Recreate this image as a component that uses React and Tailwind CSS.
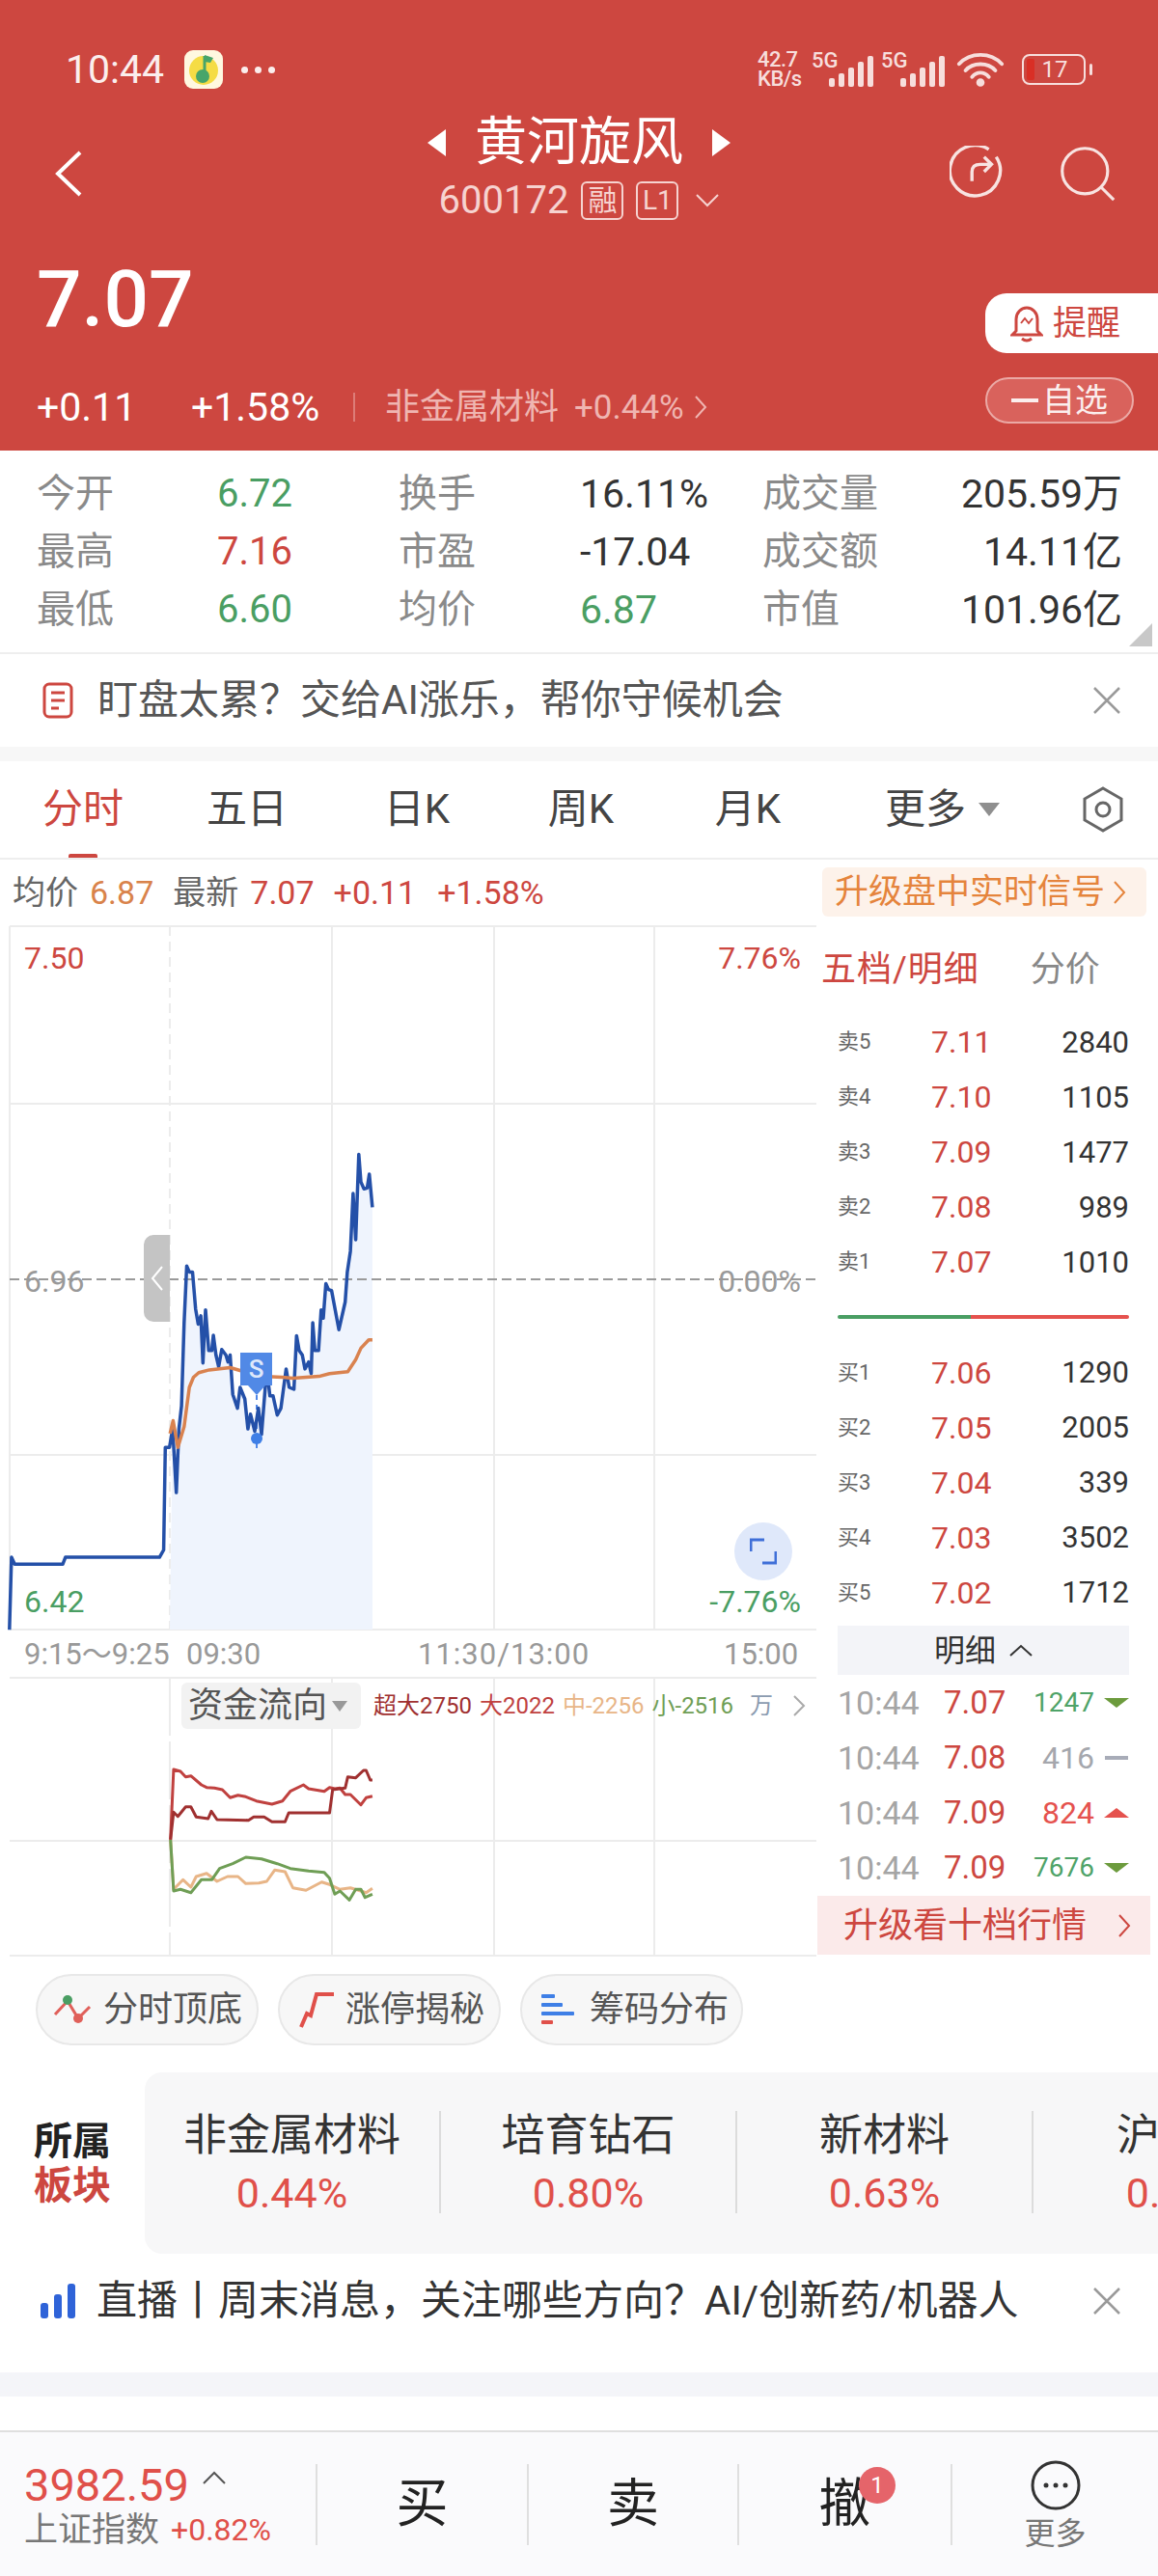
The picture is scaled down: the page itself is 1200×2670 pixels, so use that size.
import React from "react";

// points traced off the chart, in zoom coordinates (x/1.845, y/2.09 from y=950)
const blue = [[18,1545],[22,1388],[28,1403],[120,1403],[125,1388],[305,1388],[313,1372],[316,1150],[324,1150],[330,1110],[337,1248],[342,1110],[347,1060],[352,880],[357,757],[362,770],[368,770],[374,850],[379,883],[384,865],[388,967],[393,852],[399,940],[405,940],[408,907],[413,950],[418,975],[424,938],[432,950],[436,965],[440,950],[445,1035],[454,1065],[459,1020],[468,1045],[474,1110],[479,1078],[487,1115],[494,1065],[500,1122],[510,980],[516,1038],[522,1038],[530,1080],[537,1065],[547,980],[553,1020],[562,1024],[567,908],[572,940],[578,950],[583,980],[590,965],[595,990],[598,880],[602,940],[609,940],[614,852],[618,870],[623,795],[628,808],[634,810],[648,895],[660,835],[664,770],[670,725],[675,600],[680,700],[686,515],[690,575],[696,590],[702,588],[706,558],[712,630]];
const avg = [[325,1120],[331,1092],[340,1150],[352,1105],[362,1020],[370,998],[380,988],[400,982],[440,977],[470,987],[500,996],[540,998],[560,1000],[610,996],[630,990],[665,986],[680,960],[690,935],[705,917],[712,917]];

// money flow, zoom coordinates (x/1.845, y/3 from y=1700)
const big = [[326,620],[332,402],[345,408],[355,425],[365,422],[385,450],[395,458],[410,460],[425,465],[440,490],[455,482],[470,487],[490,500],[520,510],[540,500],[555,470],[580,450],[590,462],[620,470],[630,458],[640,462],[650,460],[660,480],[670,480],[690,512],[700,490],[712,485]];
const huge = [[326,620],[332,535],[340,548],[355,518],[365,518],[375,550],[398,555],[404,532],[415,558],[475,560],[485,550],[505,550],[520,565],[545,565],[552,537],[630,537],[636,465],[660,460],[665,425],[680,428],[695,405],[700,405],[708,435],[712,435]];
const mid = [[326,620],[332,775],[350,745],[365,768],[375,735],[395,725],[415,750],[435,735],[455,735],[470,757],[495,755],[510,750],[525,715],[545,720],[560,770],[585,778],[615,752],[630,760],[650,775],[670,770],[690,780],[700,785],[712,772]];
const small = [[326,620],[332,780],[345,775],[365,785],[385,745],[405,745],[420,710],[445,695],[470,675],[500,680],[530,695],[555,710],[590,718],[620,722],[630,740],[640,790],[650,780],[668,808],[680,775],[690,775],[698,800],[712,790]];

const toChart = (pts) => pts.map(([x, y]) => `${(x / 1.845).toFixed(1)},${(950 + y / 2.09 - 958).toFixed(1)}`).join(" ");
const toFlow = (pts) => pts.map(([x, y]) => `${(x / 1.845).toFixed(1)},${(1700 + y / 3 - 1738).toFixed(1)}`).join(" ");

const sells = [["卖5","7.11","2840"],["卖4","7.10","1105"],["卖3","7.09","1477"],["卖2","7.08","989"],["卖1","7.07","1010"]];
const buys = [["买1","7.06","1290"],["买2","7.05","2005"],["买3","7.04","339"],["买4","7.03","3502"],["买5","7.02","1712"]];
const trades = [
  { p: "7.07", v: "1247", c: "text-[#4fa368]", s: "text-[28px]", a: "down" },
  { p: "7.08", v: "416", c: "text-[#a5a7ad]", s: "text-[32px]", a: "flat" },
  { p: "7.09", v: "824", c: "text-[#e5524e]", s: "text-[32px]", a: "up" },
  { p: "7.09", v: "7676", c: "text-[#4fa368]", s: "text-[28px]", a: "down" },
];
const stats = [
  ["今开","6.72","text-[#4a9e63]","换手","16.11%","text-[#333]","成交量","205.59万"],
  ["最高","7.16","text-[#cd4740]","市盈","-17.04","text-[#333]","成交额","14.11亿"],
  ["最低","6.60","text-[#4a9e63]","均价","6.87","text-[#4a9e63]","市值","101.96亿"],
];
const sectors = [["非金属材料","0.44%"],["培育钻石","0.80%"],["新材料","0.63%"],["沪股通","0.52%"]];

const Signal = () => (
  <svg width="46" height="32" viewBox="0 0 46 32" fill="#f7dedc">
    <rect x="0" y="23" width="6" height="9" rx="2" />
    <rect x="10" y="18" width="6" height="14" rx="2" />
    <rect x="20" y="12" width="6" height="20" rx="2" />
    <rect x="30" y="6" width="6" height="26" rx="2" />
    <rect x="40" y="0" width="6" height="32" rx="2" />
  </svg>
);

const Close = () => (
  <svg width="30" height="30" viewBox="0 0 30 30" stroke="#9a9a9a" strokeWidth="2.5" fill="none">
    <path d="M2 2 L28 28 M28 2 L2 28" />
  </svg>
);

const App = () => {
  return (
    <div className="w-[1200px] h-[2670px] overflow-hidden bg-white font-['Roboto','Noto_Sans_CJK_SC',sans-serif]">
      {/* Red header */}
      <header className="h-[467px] bg-[#cd4740] text-white">
        {/* Status bar */}
        <div className="h-[120px] pt-[48px]">
          <div className="h-[48px] flex items-center pl-[68px] pr-[68px]">
            <span className="text-[41px] text-[#fbeeed] leading-none">10:44</span>
            <svg className="ml-[21px]" width="40" height="40" viewBox="0 0 40 40">
              <rect width="40" height="40" rx="9" fill="#fff8e0" />
              <circle cx="20" cy="21" r="15" fill="#f5dc45" />
              <path d="M21 6 L21 25" stroke="#47a56a" strokeWidth="3" />
              <path d="M21 5 L30 8 L27 13 L21 12 Z" fill="#47a56a" />
              <circle cx="19" cy="27" r="7" fill="#47a56a" />
            </svg>
            <span className="ml-[19px] flex gap-[7px]">
              <i className="w-[7px] h-[7px] rounded-full bg-[#fbeeed]" />
              <i className="w-[7px] h-[7px] rounded-full bg-[#fbeeed]" />
              <i className="w-[7px] h-[7px] rounded-full bg-[#fbeeed]" />
            </span>
            <div className="ml-auto flex items-center text-[#f7dedc]">
              <div className="text-[22px] font-medium leading-[20px] w-[52px] tracking-[-0.5px]">
                <div>42.7</div>
                <div>KB/s</div>
              </div>
              <div className="ml-[4px] relative w-[64px] h-[36px] flex items-end justify-end">
                <span className="absolute left-0 top-[-2px] text-[22px] font-medium leading-none">5G</span>
                <Signal />
              </div>
              <div className="relative ml-[8px] w-[66px] h-[36px] flex items-end justify-end">
                <span className="absolute left-0 top-[-2px] text-[22px] font-medium leading-none">5G</span>
                <Signal />
              </div>
              <svg className="ml-[12px]" width="50" height="38" viewBox="0 0 52 38" fill="none" stroke="#f7dedc" strokeWidth="4" strokeLinecap="round">
                <path d="M3 13 C15 0 37 0 49 13" />
                <path d="M10 20 C18 11 34 11 42 20" />
                <path d="M17 27 C22 21 30 21 35 27" />
                <circle cx="26" cy="33" r="2.5" fill="#f7dedc" />
              </svg>
              <div className="ml-[18px] w-[66px] h-[32px] rounded-[8px] border-2 border-[#f7dedc] flex items-center relative">
                <span className="absolute left-[3px] top-[3px] bottom-[3px] w-[8px] bg-[#d92f25] rounded-[2px]" />
                <span className="w-full text-center text-[24px] leading-none pl-[2px]">17</span>
              </div>
              <span className="ml-[4px] w-[3px] h-[12px] rounded-full bg-[#f7dedc]" />
            </div>
          </div>
        </div>

        {/* Title row */}
        <div className="h-[120px] flex items-center relative">
          <svg className="ml-[56px]" width="30" height="48" viewBox="0 0 30 48" fill="none" stroke="#fff" strokeWidth="4">
            <path d="M27 2 L4 24 L27 46" />
          </svg>
          <div className="absolute left-0 right-0 top-0 flex flex-col items-center">
            <div className="h-[56px] flex items-center gap-[30px]">
              <span className="w-0 h-0 border-y-[14px] border-y-transparent border-r-[19px] border-r-white" />
              <span className="text-[54px] leading-none">黄河旋风</span>
              <span className="w-0 h-0 border-y-[14px] border-y-transparent border-l-[19px] border-l-white" />
            </div>
            <div className="h-[40px] mt-[12px] flex items-center text-[#f6d3d0]">
              <span className="text-[40px] leading-none">600172</span>
              <span className="ml-[13px] w-[44px] h-[40px] border-2 border-[#f6d3d0] rounded-[6px] flex items-center justify-center text-[30px] leading-none">融</span>
              <span className="ml-[13px] w-[44px] h-[40px] border-2 border-[#f6d3d0] rounded-[6px] flex items-center justify-center text-[28px] leading-none">L1</span>
              <svg className="ml-[18px]" width="24" height="14" viewBox="0 0 24 14" fill="none" stroke="#f6d3d0" strokeWidth="2">
                <path d="M1 1 L12 12 L23 1" />
              </svg>
            </div>
          </div>
          <svg className="ml-auto" width="58" height="58" viewBox="0 0 60 60" fill="none" stroke="#f8e3e1" strokeWidth="3.5">
            <path d="M42 4 A27 27 0 1 0 50 12" />
            <path d="M24 38 L24 28 Q24 20 33 20 L44 20 M37 12 L45 20 L37 28" />
          </svg>
          <svg className="ml-[56px] mr-[44px]" width="58" height="60" viewBox="0 0 64 64" fill="none" stroke="#f8e3e1" strokeWidth="3.5">
            <circle cx="29" cy="29" r="26" />
            <path d="M48 48 L62 62" />
          </svg>
        </div>

        {/* Price row */}
        <div className="h-[227px] flex justify-between">
          <div className="pl-[38px] pt-[28px]">
            <div className="text-[82px] leading-[84px] font-medium">7.07</div>
            <div className="mt-[48px] h-[44px] flex items-center">
              <span className="text-[41px] w-[160px] leading-none">+0.11</span>
              <span className="text-[41px] w-[168px] leading-none">+1.58%</span>
              <span className="w-[2px] h-[30px] bg-[#dd7d78]" />
              <span className="ml-[31px] text-[36px] text-[#efb5b1] leading-none">非金属材料</span>
              <span className="ml-[16px] text-[35px] text-[#efb5b1] leading-none">+0.44%</span>
              <svg className="ml-[10px]" width="14" height="26" viewBox="0 0 14 26" fill="none" stroke="#efb5b1" strokeWidth="2">
                <path d="M2 2 L12 13 L2 24" />
              </svg>
            </div>
          </div>
          <div className="flex flex-col items-end pt-[64px] gap-[25px]">
            <div className="w-[179px] h-[62px] bg-white rounded-l-[22px] flex items-center pl-[26px] text-[#cd4740]">
              <svg width="34" height="40" viewBox="0 0 34 40" fill="none" stroke="#cd4740" strokeWidth="3">
                <path d="M6 28 L6 16 A11 12 0 0 1 28 16 L28 28 L32 32 L2 32 Z" />
                <path d="M12 36 Q17 40 22 36" />
                <path d="M11 20 L15 15 L19 20 L23 15" strokeWidth="2" />
              </svg>
              <span className="ml-[10px] text-[35px] leading-none">提醒</span>
            </div>
            <div className="mr-[25px] w-[154px] h-[48px] bg-[#d9625c] border-2 border-[#eba9a5] rounded-full flex items-center justify-center text-[34px] text-[#fbeeed] leading-none">
              <span className="w-[28px] h-[4px] bg-[#fbeeed] mr-[4px]" />
              自选
            </div>
          </div>
        </div>
      </header>

      {/* Quote stats */}
      <section className="relative h-[211px] pt-[15px] border-b-[2px] border-[#eeeeee]">
        {stats.map((r) => (
          <div key={r[0]} className="h-[60px] flex items-center text-[40px] leading-none">
            <span className="ml-[38px] w-[187px] text-[#8a8a8a]">{r[0]}</span>
            <span className={`w-[188px] ${r[2]}`}>{r[1]}</span>
            <span className="w-[188px] text-[#8a8a8a]">{r[3]}</span>
            <span className={`w-[189px] text-[41px] ${r[5]}`}>{r[4]}</span>
            <span className="w-[120px] text-[#8a8a8a]">{r[6]}</span>
            <span className="w-[253px] text-right text-[41px] text-[#333]">{r[7]}</span>
          </div>
        ))}
        <span className="absolute right-[6px] bottom-[6px] w-0 h-0 border-b-[24px] border-b-[#c8c8c8] border-l-[24px] border-l-transparent" />
      </section>

      {/* AI banner */}
      <div className="h-[96px] flex items-center pl-[44px]">
        <svg width="32" height="38" viewBox="0 0 32 38" fill="none" stroke="#cd4740" strokeWidth="3">
          <rect x="2" y="2" width="28" height="34" rx="5" />
          <path d="M9 11 L23 11 M9 19 L23 19 M9 27 L17 27" />
        </svg>
        <span className="ml-[25px] text-[42px] text-[#555] leading-none">盯盘太累？交给AI涨乐，帮你守候机会</span>
        <span className="ml-auto mr-[38px] flex"><Close /></span>
      </div>
      <div className="h-[15px] bg-[#f7f7f7]" />

      {/* Period tabs */}
      <nav className="relative h-[102px] border-b-[2px] border-[#eeeeee] flex items-center text-[42px] text-[#444] leading-none">
        <span className="w-[172px] text-center text-[#cd4740]">分时</span>
        <span className="w-[168px] text-center">五日</span>
        <span className="w-[184px] text-center">日K</span>
        <span className="w-[156px] text-center">周K</span>
        <span className="w-[190px] text-center">月K</span>
        <span className="ml-[47px]">更多</span>
        <span className="ml-[13px] w-0 h-0 border-x-[11px] border-x-transparent border-t-[14px] border-t-[#8f8f8f]" />
        <svg className="ml-[85px]" width="44" height="48" viewBox="0 0 44 48" fill="none" stroke="#666" strokeWidth="3">
          <path d="M22 2 L41 13 L41 35 L22 46 L3 35 L3 13 Z" />
          <circle cx="22" cy="24" r="7" />
        </svg>
        <span className="absolute left-[71px] bottom-0 w-[30px] h-[4px] bg-[#cd4740] rounded-t-[2px]" />
      </nav>

      {/* Average / latest row */}
      <div className="h-[67px] flex items-center text-[34px] leading-none">
        <span className="ml-[13px] text-[#666]">均价</span>
        <span className="ml-[12px] text-[#d9834b]">6.87</span>
        <span className="ml-[20px] text-[#666]">最新</span>
        <span className="ml-[12px] text-[#cd4740]">7.07</span>
        <span className="ml-[20px] text-[#cd4740]">+0.11</span>
        <span className="ml-[22px] text-[#cd4740]">+1.58%</span>
        <div className="ml-auto mr-[12px] w-[336px] h-[51px] bg-[#fdf2ea] rounded-[6px] flex items-center pl-[13px] text-[35px] text-[#e5843c]">
          升级盘中实时信号
          <svg className="ml-[8px]" width="14" height="26" viewBox="0 0 14 26" fill="none" stroke="#e5843c" strokeWidth="2">
            <path d="M2 2 L12 13 L2 24" />
          </svg>
        </div>
      </div>

      <div className="flex h-[1072px]">
        {/* Left: charts */}
        <div className="w-[846px]">
          <div className="relative h-[734px]">
            <svg className="absolute inset-0" width="846" height="734" viewBox="0 0 846 734" fill="none">
              <g stroke="#ececec" strokeWidth="2">
                <path d="M10 2 L846 2 M10 186 L846 186 M10 550 L846 550 M10 731 L846 731" />
                <path d="M10 2 L10 731 M344 2 L344 731 M512 2 L512 731 M678 2 L678 731" />
                <path d="M176 2 L176 734" strokeDasharray="10 6" />
              </g>
              <polygon points={`176,731 ${toChart(blue.filter((p) => p[0] >= 325))} 386,731`} fill="#eff4fd" />
              <path d="M10 368 L846 368" stroke="#9a9a9a" strokeWidth="2" strokeDasharray="10 5" />
              <path d="M266 488 L266 545" stroke="#4f86e8" strokeWidth="2" strokeDasharray="5 5" />
              <polyline points={toChart(blue)} stroke="#2450a8" strokeWidth="3.5" strokeLinejoin="round" />
              <polygon points="257,478 275,478 266,488" fill="#5189e6" />
              <polyline points={toChart(avg)} stroke="#d9824f" strokeWidth="3.5" strokeLinejoin="round" />
              <circle cx="266" cy="533" r="6" fill="#3f7fe6" />
            </svg>
            {/* Axis labels, handle and marks over the chart */}
            <span className="absolute left-[25px] top-[17px] text-[32px] leading-[36px] text-[#cd4740]">7.50</span>
            <span className="absolute right-[16px] top-[17px] text-[32px] leading-[36px] text-[#cd4740]">7.76%</span>
            <span className="absolute left-[25px] top-[352px] text-[32px] leading-[36px] text-[#999]">6.96</span>
            <span className="absolute right-[16px] top-[352px] text-[32px] leading-[36px] text-[#999]">0.00%</span>
            <span className="absolute left-[25px] top-[684px] text-[32px] leading-[36px] text-[#4a9e63]">6.42</span>
            <span className="absolute right-[16px] top-[684px] text-[32px] leading-[36px] text-[#4a9e63]">-7.76%</span>
            <div className="absolute left-[149px] top-[322px] w-[27px] h-[90px] bg-[#c4c4c4] rounded-l-[10px] flex items-center justify-center">
              <svg width="14" height="28" viewBox="0 0 14 28" fill="none" stroke="#fff" strokeWidth="2">
                <path d="M12 2 L2 14 L12 26" />
              </svg>
            </div>
            <div className="absolute left-[249px] top-[444px] w-[33px] h-[34px] bg-[#5189e6] text-[#dfe8fa] text-[26px] leading-[34px] font-medium text-center">S</div>
            <div className="absolute left-[761px] top-[620px] w-[60px] h-[60px] rounded-full bg-[#dfe8fa] flex items-center justify-center">
              <svg width="28" height="28" viewBox="0 0 28 28" fill="none" stroke="#3f6fd8" strokeWidth="3">
                <path d="M1 14 L1 2 L15 2 M27 14 L27 26 L13 26" />
              </svg>
            </div>
          </div>
          <div className="relative h-[46px] text-[31px] text-[#999] leading-[46px]">
            <span className="absolute left-[25px]">9:15～9:25</span>
            <span className="absolute left-[193px]">09:30</span>
            <span className="absolute left-[433px] tracking-[1px]">11:30/13:00</span>
            <span className="absolute left-[750px]">15:00</span>
          </div>
          <div className="relative h-[292px]">
            <svg className="absolute inset-0" width="846" height="292" viewBox="0 0 846 292" fill="none">
              <g stroke="#ececec" strokeWidth="2">
                <path d="M10 1 L846 1 M10 170 L846 170 M10 289 L846 289" />
                <path d="M344 1 L344 289 M512 1 L512 289 M678 1 L678 289" />
                <path d="M176 1 L176 289" strokeDasharray="60 6" />
              </g>
              <polyline points={toFlow(mid)} stroke="#e8b587" strokeWidth="3" strokeLinejoin="round" />
              <polyline points={toFlow(small)} stroke="#6f9e55" strokeWidth="3" strokeLinejoin="round" />
              <polyline points={toFlow(big)} stroke="#c0413f" strokeWidth="3" strokeLinejoin="round" />
              <polyline points={toFlow(huge)} stroke="#a03030" strokeWidth="3" strokeLinejoin="round" />
            </svg>
            <div className="relative flex items-center h-[48px] top-[6px] ml-[188px] text-[24px] leading-none">
              <div className="w-[186px] h-[48px] bg-[#f2f2f2] rounded-[6px] flex items-center pl-[7px] text-[36px] text-[#555]">
                资金流向
                <span className="ml-[5px] w-0 h-0 border-x-[8px] border-x-transparent border-t-[11px] border-t-[#999]" />
              </div>
              <span className="ml-[13px] text-[#a03030]">超大2750</span>
              <span className="ml-[8px] text-[#c0413f]">大2022</span>
              <span className="ml-[8px] text-[#e8b587]">中-2256</span>
              <span className="ml-[8px] text-[#6f9e55]">小-2516</span>
              <span className="ml-[17px] text-[#8b9bb0]">万</span>
              <svg className="ml-[20px]" width="14" height="24" viewBox="0 0 14 24" fill="none" stroke="#aaa" strokeWidth="2">
                <path d="M2 2 L12 12 L2 22" />
              </svg>
            </div>
          </div>
        </div>

        {/* Right: order book */}
        <div className="w-[354px]">
          <div className="h-[93.5px] pt-[25px] flex text-[36px] leading-[44px]">
            <span className="ml-[5px] text-[#cd4740] tracking-[1px]">五档/明细</span>
            <span className="ml-[53px] text-[#888]">分价</span>
          </div>
          <div className="pl-[22px] pr-[30px]">
            {sells.map((r) => (
              <div key={r[0]} className="h-[57px] flex items-center leading-none">
                <span className="w-[97px] text-[22px] text-[#666]">{r[0]}</span>
                <span className="text-[32px] text-[#cd4740]">{r[1]}</span>
                <span className="ml-auto text-[31px] text-[#333]">{r[2]}</span>
              </div>
            ))}
            <div className="mt-[26px] h-[4px] rounded-full flex overflow-hidden">
              <span className="w-[138px] bg-[#4a9e63]" />
              <span className="flex-1 bg-[#e5524e]" />
            </div>
            <div className="h-[27.5px]" />
            {buys.map((r) => (
              <div key={r[0]} className="h-[57px] flex items-center leading-none">
                <span className="w-[97px] text-[22px] text-[#666]">{r[0]}</span>
                <span className="text-[32px] text-[#cd4740]">{r[1]}</span>
                <span className="ml-auto text-[31px] text-[#333]">{r[2]}</span>
              </div>
            ))}
            <div className="mt-[6px] h-[51px] bg-[#f3f4f8] flex items-center justify-center text-[32px] text-[#333] leading-none">
              明细
              <svg className="ml-[14px]" width="24" height="14" viewBox="0 0 24 14" fill="none" stroke="#333" strokeWidth="2">
                <path d="M1 12 L12 2 L23 12" />
              </svg>
            </div>
            {trades.map((t, i) => (
              <div key={i} className="h-[57px] flex items-center leading-none">
                <span className="w-[110px] text-[34px] text-[#a5a5a5]">10:44</span>
                <span className="text-[33px] text-[#cd4740]">{t.p}</span>
                <span className={`ml-auto ${t.s} ${t.c}`}>{t.v}</span>
                <span className="ml-[10px] w-[26px] flex justify-center">
                  {t.a === "down" && <i className="w-0 h-0 border-x-[13px] border-x-transparent border-t-[10px] border-t-[#6c9b3d]" />}
                  {t.a === "up" && <i className="w-0 h-0 border-x-[13px] border-x-transparent border-b-[10px] border-b-[#e5524e]" />}
                  {t.a === "flat" && <i className="w-[24px] h-[4px] bg-[#a8acb8]" />}
                </span>
              </div>
            ))}
          </div>
          <div className="ml-[1px] mt-[1px] w-[345px] h-[61px] bg-[#fbeaea] flex items-center pl-[27px] text-[36px] text-[#cd4740] leading-none">
            升级看十档行情
            <svg className="ml-[32px]" width="14" height="26" viewBox="0 0 14 26" fill="none" stroke="#cd4740" strokeWidth="2">
              <path d="M2 2 L12 13 L2 24" />
            </svg>
          </div>
        </div>
      </div>

      {/* Feature chips */}
      <div className="h-[118px] flex gap-[20px] pl-[37px] pt-[16px]">
        <div className="w-[231px] h-[74px] rounded-full bg-[#f7f7f7] border-2 border-[#e8e8e8] flex items-center pl-[16px] text-[36px] text-[#555] leading-none">
          <svg width="40" height="34" viewBox="0 0 40 34" fill="none">
            <path d="M2 22 L15 8 L26 26 L38 14" stroke="#e0605a" strokeWidth="3" />
            <circle cx="15" cy="7" r="5" fill="#4a9e63" />
            <circle cx="26" cy="26" r="5" fill="#e0605a" />
          </svg>
          <span className="ml-[12px]">分时顶底</span>
        </div>
        <div className="w-[231px] h-[74px] rounded-full bg-[#f7f7f7] border-2 border-[#e8e8e8] flex items-center pl-[20px] text-[36px] text-[#555] leading-none">
          <svg width="38" height="40" viewBox="0 0 38 40" fill="none" stroke="#e0504a" strokeWidth="4">
            <path d="M2 38 L8 24 L12 26 L18 4 L36 4" />
          </svg>
          <span className="ml-[10px]">涨停揭秘</span>
        </div>
        <div className="w-[231px] h-[74px] rounded-full bg-[#f7f7f7] border-2 border-[#e8e8e8] flex items-center pl-[20px] text-[36px] text-[#555] leading-none">
          <svg width="36" height="32" viewBox="0 0 36 32">
            <rect x="0" y="0" width="14" height="4" rx="1" fill="#3f7fe6" />
            <rect x="0" y="9" width="22" height="4" rx="1" fill="#3f7fe6" />
            <rect x="0" y="18" width="34" height="4" rx="1" fill="#3f7fe6" />
            <rect x="0" y="27" width="12" height="4" rx="1" fill="#e0504a" />
          </svg>
          <span className="ml-[14px]">筹码分布</span>
        </div>
      </div>

      {/* Sectors */}
      <div className="h-[188px] flex">
        <div className="w-[150px] pl-[35px] pt-[49px] text-[40px] leading-[46px] font-bold">
          <div className="text-[#222]">所属</div>
          <div className="text-[#cd4740]">板块</div>
        </div>
        <div className="flex-1 bg-[#f7f7f8] rounded-l-[18px] flex overflow-hidden pt-[40px]">
          {sectors.map((s, i) => (
            <div key={s[0]} className={`w-[307px] shrink-0 h-[106px] flex flex-col items-center ${i < 3 ? "border-r-2 border-[#dcdcdc]" : ""}`}>
              <span className="text-[45px] leading-[52px] text-[#333] whitespace-nowrap">{s[0]}</span>
              <span className="mt-[8px] text-[43px] leading-[50px] text-[#e0504a]">{s[1]}</span>
            </div>
          ))}
        </div>
      </div>

      {/* Live banner */}
      <div className="h-[123px] pb-[26px] flex items-center pl-[42px] pr-[38px]">
        <svg width="36" height="36" viewBox="0 0 36 36" fill="#2f63d8">
          <rect x="0" y="20" width="8" height="16" rx="3" />
          <rect x="14" y="11" width="8" height="25" rx="3" />
          <rect x="28" y="0" width="8" height="36" rx="3" />
        </svg>
        <span className="ml-[22px] text-[42px] text-[#333] leading-none whitespace-nowrap">直播丨周末消息，关注哪些方向？AI/创新药/机器人</span>
        <span className="ml-auto flex"><Close /></span>
      </div>
      <div className="h-[25px] bg-[#f4f5f9]" />
      <div className="h-[35px]" />

      {/* Bottom trade bar */}
      <footer className="h-[151px] bg-[#fafafc] border-t-2 border-[#dfdfdf] flex items-center">
        <div className="w-[327px] pl-[25px] leading-none">
          <div className="flex items-center">
            <span className="text-[47px] text-[#e0504a]">3982.59</span>
            <svg className="ml-[14px] mb-[14px]" width="24" height="14" viewBox="0 0 24 14" fill="none" stroke="#555" strokeWidth="2">
              <path d="M1 13 L12 2 L23 13" />
            </svg>
          </div>
          <div className="mt-[6px] flex items-center">
            <span className="text-[35px] text-[#777]">上证指数</span>
            <span className="ml-[12px] text-[32px] text-[#e0504a]">+0.82%</span>
          </div>
        </div>
        <div className="w-[219px] h-[84px] border-l-2 border-[#dfdfdf] flex items-center justify-center text-[54px] text-[#222] leading-none">买</div>
        <div className="w-[218px] h-[84px] border-l-2 border-[#dfdfdf] flex items-center justify-center text-[54px] text-[#222] leading-none">卖</div>
        <div className="relative w-[221px] h-[84px] border-l-2 border-[#dfdfdf] flex items-center justify-center text-[54px] text-[#222] leading-none">
          撤
          <span className="absolute left-[124px] top-[3px] w-[38px] h-[38px] rounded-full bg-[#e5646a] text-white text-[24px] leading-[38px] text-center">1</span>
        </div>
        <div className="flex-1 h-[84px] border-l-2 border-[#dfdfdf] flex flex-col items-center">
          <svg className="mt-[-4px] shrink-0" width="52" height="52" viewBox="0 0 52 52" fill="none">
            <circle cx="26" cy="26" r="24" stroke="#333" strokeWidth="3" />
            <circle cx="16" cy="26" r="2.5" fill="#333" />
            <circle cx="26" cy="26" r="2.5" fill="#333" />
            <circle cx="36" cy="26" r="2.5" fill="#333" />
          </svg>
          <span className="mt-[8px] text-[32px] text-[#777] leading-none">更多</span>
        </div>
      </footer>
    </div>
  );
};

export default App;
